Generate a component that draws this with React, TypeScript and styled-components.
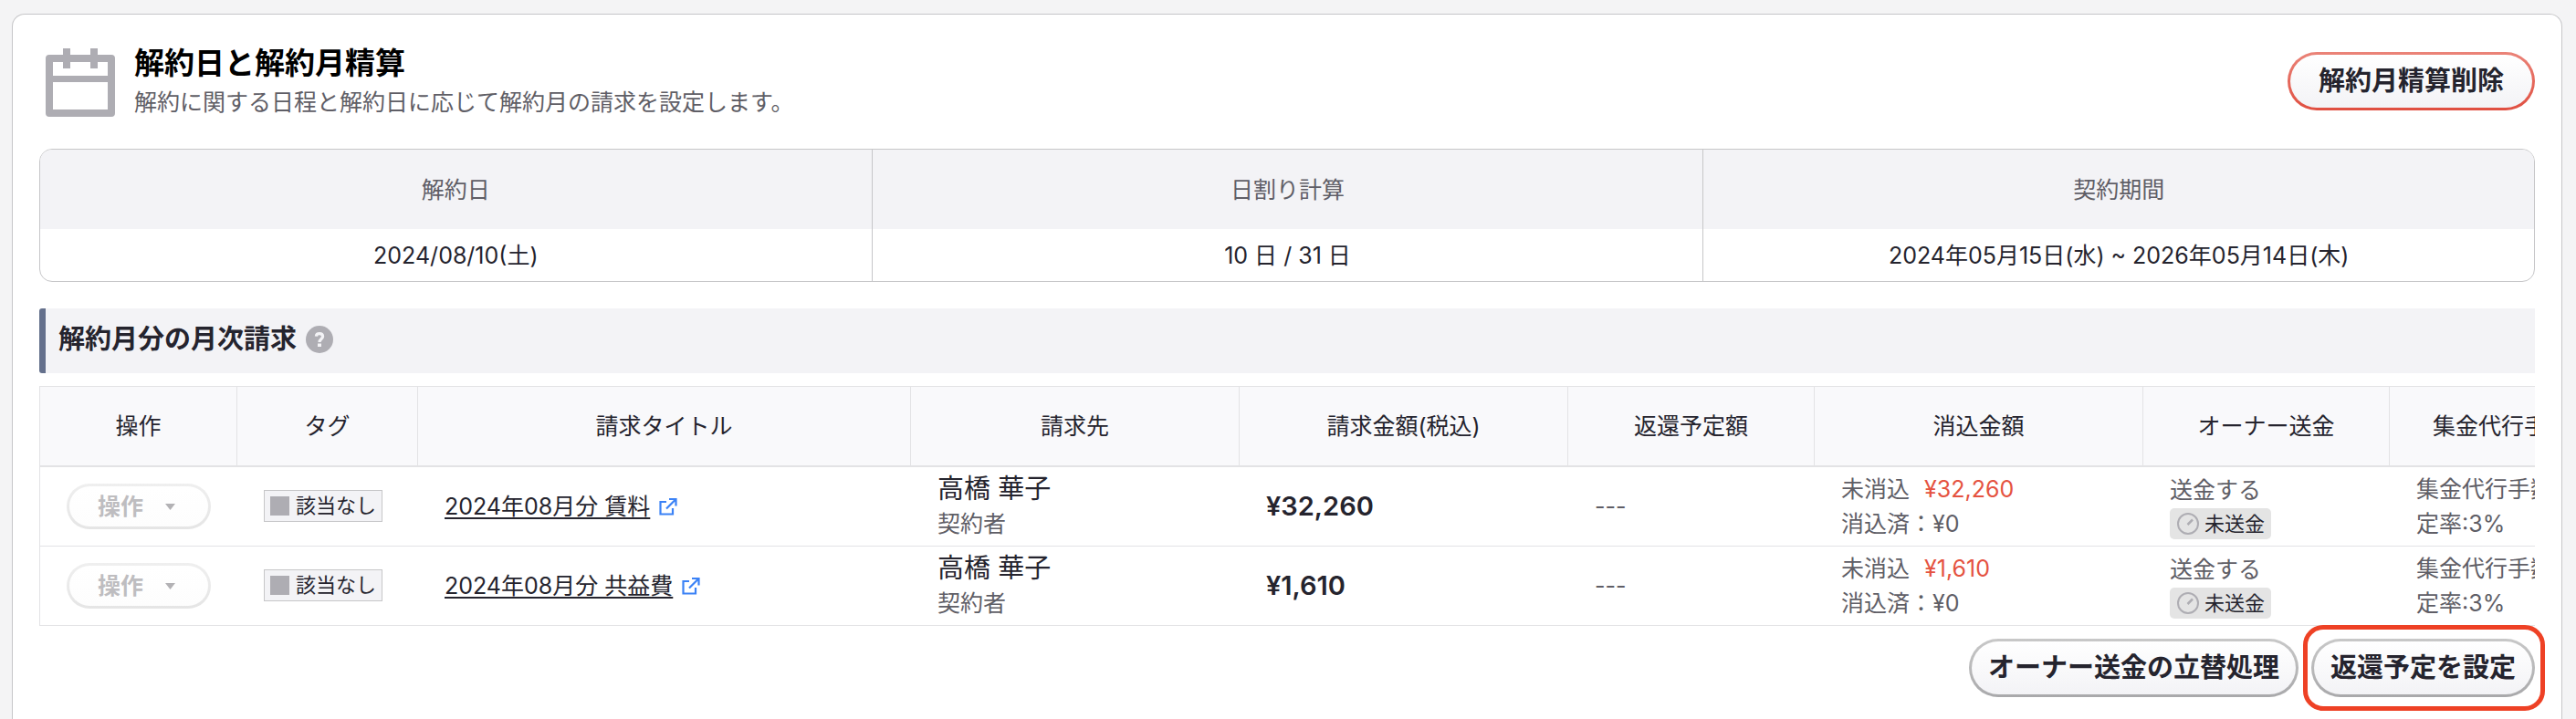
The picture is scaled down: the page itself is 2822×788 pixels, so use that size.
import React from "react";
import styled, { createGlobalStyle } from "styled-components";

const GlobalStyle = createGlobalStyle`
  *, *::before, *::after { box-sizing: border-box; }
  body {
    margin: 0;
    background: #f4f4f5;
    color: #25242e;
    font-family: Inter, "Noto Sans CJK JP", sans-serif;
    font-size: 25px;
    line-height: 36px;
  }
  button { font: inherit; color: inherit; }
  h2, h3, p { margin: 0; }
`;

const Page = styled.main`
  padding: 15px 15px 0 13px;
`;

const Card = styled.section`
  border: 1px solid #c6c6c8;
  border-bottom: 0;
  border-radius: 14px 14px 0 0;
  background: #fff;
  padding: 28px 29px 24px;
`;

const Header = styled.header`
  display: flex;
  align-items: center;
  gap: 18px;
  padding-left: 2px;
  margin-bottom: 29px;
`;

const HeaderText = styled.div`
  flex: 1;
  padding-top: 3px;
`;

const Title = styled.h2`
  font-size: 33px;
  line-height: 44px;
  font-weight: 700;
  color: #000;
`;

const Description = styled.p`
  line-height: 43px;
  color: #5f5e66;
`;

const PillButton = styled.button<{ $tone?: "danger" | "neutral" }>`
  height: 64px;
  padding: 0 ${(p) => (p.$tone === "danger" ? 31 : 18)}px;
  border: 3px solid transparent;
  border-radius: 32px;
  background:
    linear-gradient(#fff, #f3f3f6) padding-box,
    ${(p) =>
      p.$tone === "danger"
        ? "linear-gradient(#ea8378, #e04e40)"
        : "linear-gradient(#c8c8c8, #a9a9ab)"} border-box;
  font-size: 29px;
  font-weight: 700;
  white-space: nowrap;
`;

const Summary = styled.table`
  width: 100%;
  table-layout: fixed;
  border: 1px solid #c6c6c8;
  border-radius: 14px;
  border-spacing: 0;
  overflow: hidden;
  text-align: center;

  th, td { padding: 0; font-weight: 400; }
  th { height: 87px; background: #f3f3f6; color: #5f5e66; }
  td { height: 57px; }
  th + th, td + td { border-left: 1px solid #c6c6c8; }
`;

const SectionHead = styled.div`
  display: flex;
  align-items: center;
  gap: 10px;
  height: 71px;
  margin: 29px 0 14px;
  padding: 0 0 4px 14px;
  border-left: 7px solid #64708c;
  border-radius: 3px 0 0 3px;
  background: #f3f3f6;
`;

const SectionTitle = styled.h3`
  font-size: 29px;
  font-weight: 700;
`;

const HelpButton = styled.button`
  display: flex;
  width: 30px;
  height: 30px;
  padding: 0;
  border: 0;
  background: none;
`;

const TableScroll = styled.div`
  overflow: hidden;
`;

const BillTable = styled.table`
  width: 2844px;
  table-layout: fixed;
  border-spacing: 0;
  border-left: 1px solid #e3e3e5;

  th {
    height: 89px;
    padding: 0;
    border-top: 1px solid #e3e3e5;
    border-bottom: 2px solid #e3e3e5;
    background: #f9f9fb;
    font-weight: 400;
  }
  th + th { border-left: 1px solid #e3e3e5; }
  td {
    height: 87px;
    padding: 0 0 0 30px;
    border-bottom: 1px solid #e3e3e5;
    text-align: left;
    white-space: nowrap;
  }
  td:first-child { padding-left: 29px; }
`;

const ActionButton = styled.button`
  display: flex;
  align-items: center;
  gap: 24px;
  height: 50px;
  padding: 0 36px 0 31px;
  border: 3px solid transparent;
  border-radius: 25px;
  background:
    linear-gradient(#fff, #fdfdfd) padding-box,
    linear-gradient(#efefef, #e5e5e5) border-box;
  color: #bebdc0;
  font-weight: 700;
`;

const Tag = styled.span`
  display: inline-flex;
  align-items: center;
  gap: 7px;
  height: 35px;
  padding: 0 6px;
  border: 1px solid #c6c6c8;
  background: #f3f3f6;
  font-size: 22px;
`;

const Swatch = styled.span`
  width: 21px;
  height: 21px;
  background: #aeadb3;
`;

const BillLink = styled.a`
  display: flex;
  align-items: center;
  gap: 10px;
  color: inherit;
  text-decoration: none;

  span {
    text-decoration: underline;
    text-decoration-thickness: 2px;
    text-underline-offset: 3px;
    text-decoration-skip-ink: none;
  }
`;

const Stack = styled.div`
  display: flex;
  flex-direction: column;
  align-items: flex-start;
  gap: 2px;
  color: #5f5e66;
`;

const Name = styled.span`
  font-size: 29px;
  color: #25242e;
`;

const Amount = styled.strong`
  font-size: 29px;
  font-weight: 600;
`;

const Muted = styled.span`
  color: #5f5e66;
`;

const Unpaid = styled.span`
  margin-left: 16px;
  color: #e55341;
`;

const Badge = styled.span`
  display: inline-flex;
  align-items: center;
  gap: 6px;
  height: 34px;
  padding: 0 7px 0 8px;
  border-radius: 5px;
  background: #e4e4e4;
  color: #25242e;
  font-size: 22px;
`;

const Footer = styled.footer`
  display: flex;
  justify-content: flex-end;
  gap: 14px;
  margin-top: 14px;
`;

const Highlight = styled.div`
  position: relative;
  display: flex;

  &::after {
    content: "";
    position: absolute;
    inset: -15px -11px -15px -9px;
    border: 5px solid #ee4125;
    border-radius: 22px;
    pointer-events: none;
  }
`;

const CalendarIcon = () => (
  <svg width="84" height="90" viewBox="0 -4 84 90" fill="#aeadb3" aria-hidden="true">
    <path
      fillRule="evenodd"
      d="M9 12H24V5H32V12H54V5H62V12H77Q81 12 81 16V76Q81 80 77 80H9Q5 80 5 76V16Q5 12 9 12ZM13 20V35H73V20H62V27H54V20H32V27H24V20ZM13 42V72H73V42Z"
    />
  </svg>
);

const HelpIcon = () => (
  <svg width="30" height="30" viewBox="0 0 30 30" aria-hidden="true">
    <circle cx="15" cy="15" r="15" fill="#aeadb3" />
    <path d="M11.400 11.600C11.600 7.600 18.600 7.600 18.600 11.800C18.600 14.400 15 14.600 15 18" fill="none" stroke="#f3f3f6" strokeWidth="3.200" />
    <rect x="13" y="19.500" width="4" height="3.500" fill="#f3f3f6" />
  </svg>
);

const CaretIcon = () => (
  <svg width="11" height="7" viewBox="0 0 11 7" aria-hidden="true">
    <path d="M0 0H11L5.5 7Z" fill="#b3b2b5" />
  </svg>
);

const ExternalIcon = () => (
  <svg width="20" height="20" viewBox="0 0 20 20" fill="none" stroke="#3b82f6" strokeWidth="2.200" aria-hidden="true">
    <path d="M8 5H1.500V18.500H15V12M11 2H18.500V9.500M18.500 2L8 12.500" />
  </svg>
);

const ClockIcon = () => (
  <svg width="24" height="24" viewBox="0 0 24 24" fill="none" stroke="#aeadb3" strokeWidth="2" aria-hidden="true">
    <circle cx="12" cy="12" r="11" />
    <path d="M11.500 13L17 7.500" strokeWidth="2.500" />
  </svg>
);

const columns: [string, number][] = [
  ["操作", 215],
  ["タグ", 198],
  ["請求タイトル", 540],
  ["請求先", 360],
  ["請求金額(税込)", 360],
  ["返還予定額", 270],
  ["消込金額", 360],
  ["オーナー送金", 270],
  ["集金代行手数料", 270],
];

const bills = [
  { title: "2024年08月分 賃料", amount: "¥32,260" },
  { title: "2024年08月分 共益費", amount: "¥1,610" },
];

export default function App() {
  return (
    <>
      <GlobalStyle />
      <Page>
        <Card>
          <Header>
            <CalendarIcon />
            <HeaderText>
              <Title>解約日と解約月精算</Title>
              <Description>解約に関する日程と解約日に応じて解約月の請求を設定します。</Description>
            </HeaderText>
            <PillButton type="button" $tone="danger">解約月精算削除</PillButton>
          </Header>

          <Summary>
            <thead>
              <tr>
                <th scope="col">解約日</th>
                <th scope="col">日割り計算</th>
                <th scope="col">契約期間</th>
              </tr>
            </thead>
            <tbody>
              <tr>
                <td>2024/08/10(土)</td>
                <td>10 日 / 31 日</td>
                <td>2024年05月15日(水) ~ 2026年05月14日(木)</td>
              </tr>
            </tbody>
          </Summary>

          <SectionHead>
            <SectionTitle>解約月分の月次請求</SectionTitle>
            <HelpButton type="button" aria-label="ヘルプ">
              <HelpIcon />
            </HelpButton>
          </SectionHead>

          <TableScroll>
            <BillTable>
              <colgroup>
                {columns.map(([label, width]) => (
                  <col key={label} width={width} />
                ))}
              </colgroup>
              <thead>
                <tr>
                  {columns.map(([label]) => (
                    <th key={label} scope="col">{label}</th>
                  ))}
                </tr>
              </thead>
              <tbody>
                {bills.map((bill) => (
                  <tr key={bill.title}>
                    <td>
                      <ActionButton type="button" disabled>
                        操作
                        <CaretIcon />
                      </ActionButton>
                    </td>
                    <td>
                      <Tag>
                        <Swatch />
                        該当なし
                      </Tag>
                    </td>
                    <td>
                      <BillLink href="#">
                        <span>{bill.title}</span>
                        <ExternalIcon />
                      </BillLink>
                    </td>
                    <td>
                      <Stack>
                        <Name>高橋 華子</Name>
                        <span>契約者</span>
                      </Stack>
                    </td>
                    <td>
                      <Amount>{bill.amount}</Amount>
                    </td>
                    <td>
                      <Muted>---</Muted>
                    </td>
                    <td>
                      <Stack>
                        <span>
                          未消込<Unpaid>{bill.amount}</Unpaid>
                        </span>
                        <span>消込済：¥0</span>
                      </Stack>
                    </td>
                    <td>
                      <Stack>
                        <span>送金する</span>
                        <Badge>
                          <ClockIcon />
                          未送金
                        </Badge>
                      </Stack>
                    </td>
                    <td>
                      <Stack>
                        <span>集金代行手数料</span>
                        <span>定率:3%</span>
                      </Stack>
                    </td>
                  </tr>
                ))}
              </tbody>
            </BillTable>
          </TableScroll>

          <Footer>
            <PillButton type="button">オーナー送金の立替処理</PillButton>
            <Highlight>
              <PillButton type="button">返還予定を設定</PillButton>
            </Highlight>
          </Footer>
        </Card>
      </Page>
    </>
  );
}
